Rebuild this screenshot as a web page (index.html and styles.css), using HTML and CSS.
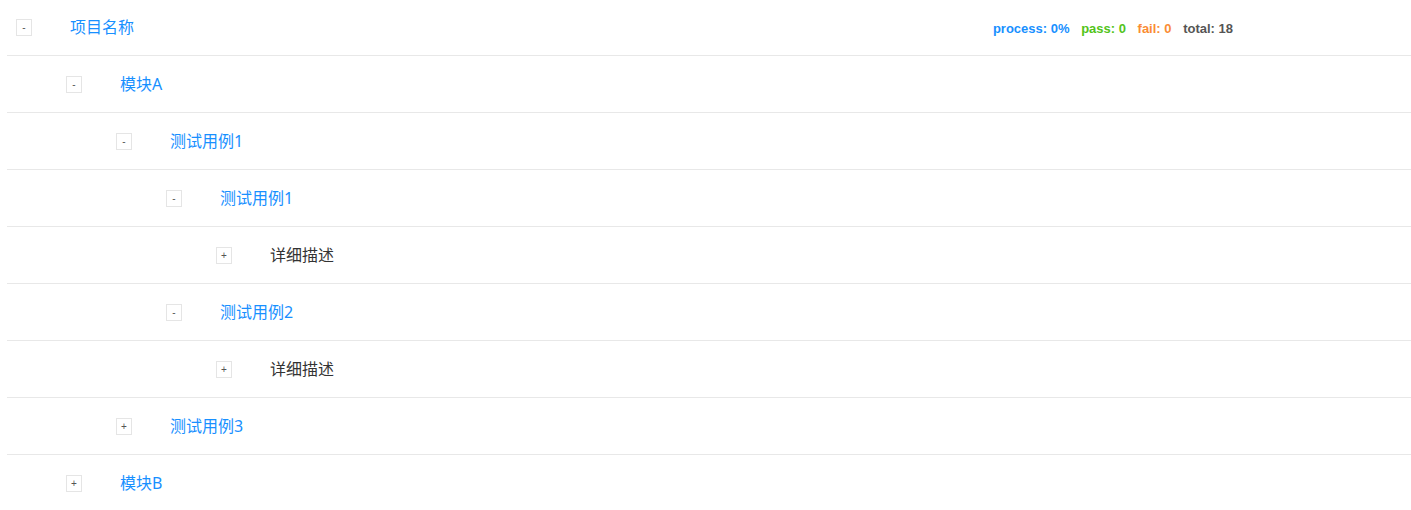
FILE: index.html
```html
<!DOCTYPE html>
<html lang="zh">
<head>
    <meta charset="UTF-8">
    <title>测试用例</title>
    <link rel="stylesheet" href="styles.css">
</head>
<body>

<div class="tree">
    <div class="row level-0">
        <span class="toggle">-</span>
        <span class="name">项目名称</span>
        <div class="stats">
            <span class="process">process: 0%</span>
            <span class="pass">pass: 0</span>
            <span class="fail">fail: 0</span>
            <span class="total">total: 18</span>
        </div>
    </div>
    <div class="row level-1">
        <span class="toggle">-</span>
        <span class="name">模块A</span>
    </div>
    <div class="row level-2">
        <span class="toggle">-</span>
        <span class="name">测试用例1</span>
    </div>
    <div class="row level-3">
        <span class="toggle">-</span>
        <span class="name">测试用例1</span>
    </div>
    <div class="row level-4">
        <span class="toggle">+</span>
        <span class="name desc">详细描述</span>
    </div>
    <div class="row level-3">
        <span class="toggle">-</span>
        <span class="name">测试用例2</span>
    </div>
    <div class="row level-4">
        <span class="toggle">+</span>
        <span class="name desc">详细描述</span>
    </div>
    <div class="row level-2">
        <span class="toggle">+</span>
        <span class="name">测试用例3</span>
    </div>
    <div class="row level-1">
        <span class="toggle">+</span>
        <span class="name">模块B</span>
    </div>
</div>

</body>
</html>
```

FILE: styles.css
```css
body {
    margin: 0;
    background: #fff;
    font-family: "Noto Sans", "Noto Sans CJK SC", sans-serif;
}
.tree {
    margin-top: -1px;
    padding-left: 7px;
}
.row {
    display: flex;
    align-items: center;
    height: 56px;
    border-bottom: 1px solid #e8e8e8;
}
.row:last-child {
    border-bottom: none;
}
.level-0 { padding-left: 9px; }
.level-1 { padding-left: 59px; }
.level-2 { padding-left: 109px; }
.level-3 { padding-left: 159px; }
.level-4 { padding-left: 209px; }

.toggle {
    box-sizing: border-box;
    width: 16px;
    height: 17px;
    border: 1px solid #e5e5e5;
    font-family: "Liberation Sans", sans-serif;
    font-size: 10px;
    line-height: 15px;
    text-align: center;
    color: #555;
}
.name {
    margin-left: 38px;
    margin-bottom: 2px;
    font-size: 16px;
    color: #1890ff;
}
.name.desc {
    color: #333;
}
.stats {
    margin-left: auto;
    margin-right: 178px;
    margin-top: 2px;
    font-family: "Liberation Sans", sans-serif;
    font-size: 13px;
    font-weight: bold;
}
.stats span {
    margin-left: 8px;
}
.process { color: #1890ff; }
.pass { color: #52c41a; }
.fail { color: #fa8c35; }
.total { color: #555; }
```
